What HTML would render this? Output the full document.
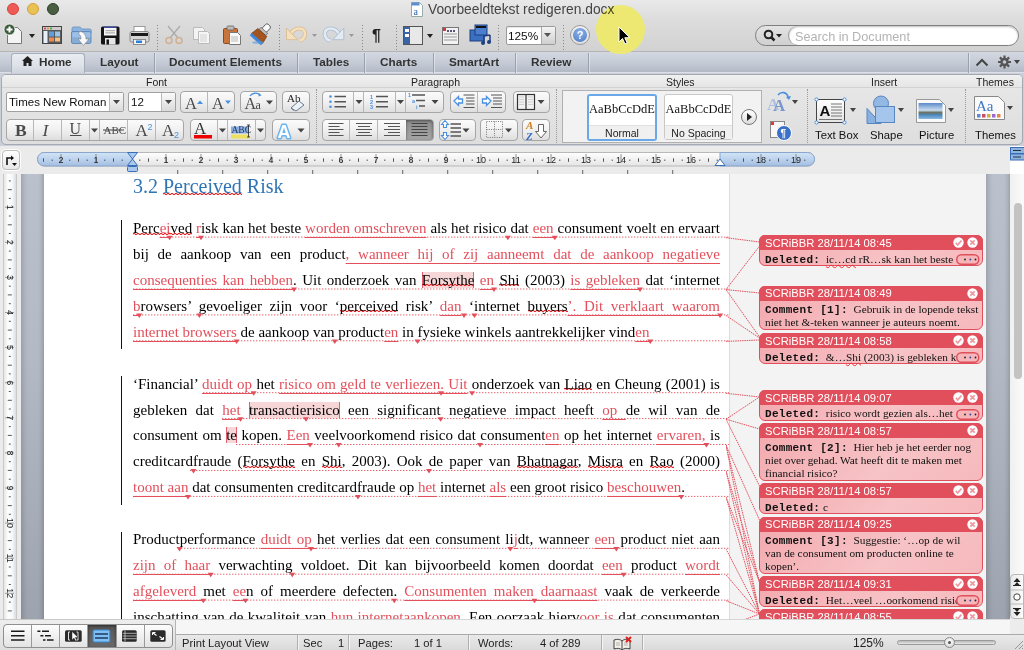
<!DOCTYPE html>
<html><head><meta charset="utf-8">
<style>
*{margin:0;padding:0;box-sizing:border-box}
html,body{width:1024px;height:650px;overflow:hidden;background:#fff;font-family:"Liberation Sans",sans-serif;position:relative}
.a{position:absolute;white-space:nowrap}
.tabsep{top:53px;width:1px;height:20px;background:#9aa1ae;box-shadow:1px 0 0 rgba(255,255,255,.4)}
.tabt{top:54px;font-size:11.75px;font-weight:bold;color:#333;line-height:16px}
.glab{top:76px;font-size:10.5px;color:#222;line-height:13px}
.gsep{top:89px;width:1px;height:54px;border-left:1px dotted #999}
.btn{border:1px solid #a6a6a6;border-radius:4px;background:linear-gradient(#fbfbfb,#f0f0f0 50%,#dedede)}
.vdiv{width:1px;background:#b8b8b8}
.ddb{width:14px;background:linear-gradient(#fafafa,#dadada);border-left:1px solid #bbb}
.ilab{top:128px;font-size:11.3px;color:#111;line-height:14px}
</style></head><body>
<style>
.ln{font-family:"Liberation Serif",serif;font-size:15px;line-height:18px;color:#000;width:587px;white-space:nowrap}
.ln.j{text-align:justify;text-align-last:justify;white-space:normal}
.ins{color:#e2505c;text-decoration:underline;text-decoration-color:#e2505c;text-underline-offset:4px;text-decoration-thickness:1px}
.hl{background-color:#f7d6d8;box-shadow:inset 1px 0 #e06070,inset -1px 0 #e06070}
</style>
<style>
.bal{border:1.5px solid #e24f5c;border-radius:6px;background:linear-gradient(135deg,#f3a9ae,#f7c3c6 60%,#f6b9bd)}
.balh{background:#e24f5c;border-radius:6px 6px 0 0}
.balt{font-size:11.25px;line-height:13px;color:#fff}
.balb{font-family:"Liberation Serif",serif;font-size:11.3px;line-height:14px;color:#111}
.mono{font-family:"Liberation Mono",monospace;font-size:11px;font-weight:bold;letter-spacing:0.3px}
</style>
<style>
.ssep{top:635px;width:1px;height:15px;background:#b0b0b0;box-shadow:1px 0 0 #f4f4f4}
.stt{top:636px;font-size:11.2px;line-height:15px;color:#222}
</style>
<style>.sp{background-image:repeating-linear-gradient(90deg,#e82828 0 2px,rgba(232,40,40,.25) 2px 4px),repeating-linear-gradient(90deg,rgba(232,40,40,.25) 0 2px,#e82828 2px 4px);background-size:100% 1px,100% 1px;background-position:0 calc(100% - 2.4px),0 calc(100% - 1.4px);background-repeat:no-repeat}.ins .sp{text-decoration:none}</style>
<!-- TITLE BAR + TOOLBAR -->
<div class="a" style="left:0;top:0;width:1024px;height:52px;background:linear-gradient(#e9e9e9,#dcdcdc 40%,#d2d2d2);border-bottom:1px solid #b3b3b3"></div>
<div class="a" style="left:7px;top:3px;width:12px;height:12px;border-radius:50%;background:#ee5b56;border:0.5px solid #d8453f"></div>
<div class="a" style="left:27px;top:3px;width:12px;height:12px;border-radius:50%;background:#e9c256;border:0.5px solid #d8a040"></div>
<div class="a" style="left:47px;top:3px;width:12px;height:12px;border-radius:50%;background:#4a5e42;border:0.5px solid #2e3e2a"></div>
<svg class="a" style="left:411px;top:2px" width="12" height="15" viewBox="0 0 12 15"><path d="M0.5 0.5h8l3 3v11h-11z" fill="#fff" stroke="#9aa" stroke-width="1"/><rect x="0.5" y="0.5" width="8" height="3" fill="#5b8fd0"/><text x="2.5" y="13" font-family="Liberation Serif" font-size="10" fill="#2a5fb0">a</text></svg>
<!-- toolbar icons -->
<svg class="a" style="left:0;top:20px" width="620" height="30" viewBox="0 0 620 30">
 <!-- new doc -->
 <path d="M7.5 7.5h10l4 4v12h-14z" fill="#f4f4f4" stroke="#777" stroke-width="1"/>
 <circle cx="9.5" cy="9.5" r="5.5" fill="#3a5a3a" stroke="#fff" stroke-width="0.8"/>
 <path d="M9.5 6.5v6M6.5 9.5h6" stroke="#fff" stroke-width="2"/>
 <path d="M29 14h6l-3 4z" fill="#222"/>
 <!-- gallery -->
 <rect x="42.5" y="6.5" width="19" height="17" fill="#5a5a5a" stroke="#444"/>
 <rect x="43" y="7" width="18" height="3" fill="#ccc"/>
 <circle cx="45" cy="8.5" r="1" fill="#d33"/><circle cx="48" cy="8.5" r="1" fill="#e83"/><circle cx="51" cy="8.5" r="1" fill="#3a3"/>
 <rect x="43.5" y="11" width="4" height="12" fill="#e8eef8"/>
 <rect x="49" y="11.5" width="5" height="5" fill="#5aa0e0"/><rect x="55" y="11.5" width="5" height="5" fill="#9cc4ea"/>
 <rect x="49" y="17.5" width="5" height="4" fill="#f08a50"/><rect x="55" y="17.5" width="5" height="4" fill="#f5c080"/>
 <!-- folder -->
 <path d="M72 8.5q0-1.5 1.5-1.5h6q1 0 1.5 1l0.8 1h8q1.5 0 1.5 1.5v2h-19.3z" fill="#8cb4e0" stroke="#6a8fbc" stroke-width="0.8"/>
 <rect x="71.5" y="11.5" width="19.5" height="12" rx="1.5" fill="#86acd8" stroke="#5f84b4" stroke-width="0.9"/>
 <rect x="72.3" y="12.3" width="18" height="5" fill="#9cc0e8"/>
 <path d="M79.5 11.5c5 0 6.5 4 6.5 7.5h3l-5.5 6.5-5.5-6.5h3c0-3-1-4.5-2.5-5z" fill="#fafafa" stroke="#8a8a8a" stroke-width="0.7"/>
 <!-- save -->
 <rect x="101" y="6.5" width="18.5" height="18" rx="1.5" fill="#151515"/>
 <rect x="104" y="6.5" width="12.5" height="1.5" fill="#3a4aa0"/>
 <rect x="104" y="8" width="12.5" height="7.5" fill="#f6f6f6"/><path d="M105.5 10.7h9.5M105.5 12.9h9.5" stroke="#888" stroke-width="0.8"/>
 <rect x="105" y="18" width="10.5" height="6.5" fill="#e6e6e6"/><rect x="106.5" y="19.5" width="2.5" height="5" fill="#151515"/>
 <!-- print -->
 <rect x="134" y="6.5" width="11" height="6" fill="#fff" stroke="#888" stroke-width="0.8"/>
 <path d="M130 13.5q0-2 2-2h15q2 0 2 2v7q0 1.5-1.5 1.5h-16q-1.5 0-1.5-1.5z" fill="#d4d4d4" stroke="#777" stroke-width="0.8"/>
 <rect x="131" y="13" width="17" height="3" fill="#1a1a1a"/>
 <rect x="133.5" y="19.5" width="12" height="5" fill="#f4f4f4" stroke="#666" stroke-width="0.7"/>
 <rect x="136" y="20.5" width="6" height="2.5" fill="#2a80d8"/>
 <!-- sep -->
 <path d="M157.5 5v26" stroke="#888" stroke-width="1" stroke-dasharray="1 2"/>
 <!-- scissors -->
 <path d="M168 6l10 12M180 6l-10 12" stroke="#aaa" stroke-width="1.2"/>
 <circle cx="169" cy="20.5" r="3" fill="none" stroke="#d0b090" stroke-width="1.5"/><circle cx="179" cy="20.5" r="3" fill="none" stroke="#d0b090" stroke-width="1.5"/>
 <!-- copy -->
 <path d="M193.5 7.5h9l2 2v10h-11z" fill="#f3f3f3" stroke="#bbb"/>
 <path d="M198.5 11.5h9l2 2v10h-11z" fill="#f6f6f6" stroke="#bbb"/>
 <path d="M200 15h7M200 17h7M200 19h7M200 21h7" stroke="#ccc" stroke-width="0.8"/>
 <!-- paste -->
 <rect x="223.5" y="8.5" width="14" height="15" rx="1" fill="#c8743a" stroke="#8a4a20"/>
 <rect x="227" y="6" width="7" height="4" rx="1" fill="#bbb" stroke="#666" stroke-width="0.8"/>
 <path d="M229.5 12.5h8l3 3v9h-11z" fill="#fafafa" stroke="#777"/>
 <path d="M231 17h7M231 19h7M231 21h7" stroke="#aaa" stroke-width="0.8"/>
 <!-- brush -->
 <g transform="rotate(42 261 14)">
  <rect x="258" y="2" width="6" height="8" rx="2" fill="#fafafa" stroke="#555" stroke-width="0.9"/>
  <rect x="256.5" y="9" width="9" height="3" fill="#bbb" stroke="#555" stroke-width="0.6"/>
  <path d="M255 12h12l1.5 8h-15z" fill="#a4541e" stroke="#6a3410" stroke-width="0.6"/>
  <path d="M253.5 19.5h15v3h-15z" fill="#3f86dc"/>
 </g>
 <ellipse cx="258" cy="22.5" rx="6" ry="1.3" fill="#5a9ae0" opacity="0.6"/>
 <!-- sep -->
 <path d="M279.5 5v26" stroke="#888" stroke-width="1" stroke-dasharray="1 2"/>
 <!-- undo -->
 <path d="M290.5 14.5C294 6.5 306 6.5 305 14.5 304.5 18.5 302 20 299.5 20.5" fill="none" stroke="#d8bc94" stroke-width="4.2"/>
 <path d="M290.5 14.5C294 6.5 306 6.5 305 14.5 304.5 18.5 302 20 299.5 20.5" fill="none" stroke="#f6e0bc" stroke-width="2.6"/>
 <path d="M286.5 8v11.7h11z" fill="#f6e0bc" stroke="#d8bc94" stroke-width="0.9"/>
 <path d="M312 14h5l-2.5 3z" fill="#999"/>
 <!-- redo -->
 <path d="M339.3 14.5C335.8 6.5 323.8 6.5 324.8 14.5 325.3 18.5 327.8 20 330.3 20.5" fill="none" stroke="#aebcd0" stroke-width="4.2"/>
 <path d="M339.3 14.5C335.8 6.5 323.8 6.5 324.8 14.5 325.3 18.5 327.8 20 330.3 20.5" fill="none" stroke="#e2eaf4" stroke-width="2.6"/>
 <path d="M343.8 8v11.7h-11z" fill="#e2eaf4" stroke="#aebcd0" stroke-width="0.9"/>
 <path d="M349 14h5l-2.5 3z" fill="#999"/>
 <!-- sep -->
 <path d="M362.5 5v26" stroke="#888" stroke-width="1" stroke-dasharray="1 2"/>
 <!-- pilcrow -->
 <text x="372" y="21" font-family="Liberation Sans" font-weight="bold" font-size="16" fill="#222">¶</text>
 <!-- sep -->
 <path d="M396.5 5v26" stroke="#888" stroke-width="1" stroke-dasharray="1 2"/>
 <!-- sidebar -->
 <rect x="403.5" y="6.5" width="19" height="18" fill="#e8e8e8" stroke="#555"/>
 <rect x="404" y="7" width="6" height="17" fill="#3a64a8"/>
 <rect x="405" y="9" width="4" height="3" fill="#fff"/><rect x="405" y="14" width="4" height="3" fill="#fff"/>
 <path d="M427 14h6l-3 4z" fill="#222"/>
 <!-- header view -->
 <rect x="442.5" y="7.5" width="16" height="17" fill="#f2f2f2" stroke="#777"/>
 <rect x="443" y="8" width="3" height="3" fill="#d33"/>
 <path d="M444 14h13M444 17h13M444 20h13" stroke="#999" stroke-width="1"/>
 <rect x="447" y="10" width="2" height="2" fill="#557"/><rect x="450" y="10" width="2" height="2" fill="#557"/><rect x="453" y="10" width="2" height="2" fill="#557"/>
 <!-- media -->
 <rect x="470" y="10" width="14" height="11" fill="#3b6fc0" stroke="#1d3f80"/>
 <rect x="475" y="5" width="12" height="10" fill="#4a7fd0" stroke="#1d3f80"/>
 <rect x="476" y="6" width="10" height="2" fill="#111"/>
 <path d="M484 16v7M490 15v7M484 16l6-1" stroke="#1d3f80" stroke-width="1.5" fill="none"/>
 <circle cx="483" cy="23" r="2" fill="#1d3f80"/><circle cx="489" cy="22" r="2" fill="#1d3f80"/>
 <!-- sep -->
 <path d="M498.5 5v26" stroke="#888" stroke-width="1" stroke-dasharray="1 2"/>
 <!-- sep -->
 <path d="M563.5 5v26" stroke="#888" stroke-width="1" stroke-dasharray="1 2"/>
</svg>
<!-- zoom box -->
<div class="a" style="left:506px;top:26px;width:50px;height:19px;background:#fff;border:1px solid #9a9a9a;border-radius:2px;box-shadow:inset 0 1px 1px rgba(0,0,0,.1)"></div>
<div class="a" style="left:508px;top:28px;font-size:11.8px;line-height:17px;color:#111">125%</div>
<div class="a" style="left:541px;top:27px;width:14px;height:17px;background:linear-gradient(#f4f4f4,#cfcfcf);border-left:1px solid #aaa"></div>
<svg class="a" style="left:544px;top:33px" width="8" height="5"><path d="M0 0h7l-3.5 4z" fill="#555"/></svg>
<!-- help -->
<div class="a" style="left:570px;top:25px;width:20px;height:20px;border-radius:50%;background:radial-gradient(circle at 50% 35%,#fff,#d5d5d5);border:1px solid #9a9a9a"></div>
<div class="a" style="left:573px;top:28px;width:14px;height:14px;border-radius:50%;background:radial-gradient(circle at 50% 30%,#8fb4ea,#4a78c4);color:#fff;font-size:11px;font-weight:bold;text-align:center;line-height:14px">?</div>
<!-- search -->
<div class="a" style="left:755px;top:25px;width:264px;height:21px;border-radius:11px;background:linear-gradient(#e4e4e4,#d0d0d0);border:1px solid #7e7e7e"></div>
<div class="a" style="left:788px;top:26px;width:230px;height:19px;border-radius:10px;background:#fff;border-left:1px solid #999;box-shadow:inset 0 1px 2px rgba(0,0,0,.25)"></div>
<svg class="a" style="left:763px;top:29px" width="22" height="14"><circle cx="5.5" cy="5.5" r="3.8" fill="none" stroke="#222" stroke-width="2"/><path d="M8 8l3.5 3.5" stroke="#222" stroke-width="2.5"/><path d="M13 5h6l-3 3.5z" fill="#222"/></svg>
<div class="a" style="left:795px;top:28.5px;font-size:12.7px;line-height:16px;color:#b3b3b3">Search in Document</div>
<!-- TABS -->
<div class="a" style="left:0;top:52px;width:1024px;height:20px;background:linear-gradient(#d3d8e1,#c3c9d4 60%,#b3b9c5);"></div><div class="a" style="left:0;top:72px;width:1024px;height:1px;background:#dde0e6"></div>
<div class="a tabsep" style="left:154px"></div><div class="a tabsep" style="left:297px"></div><div class="a tabsep" style="left:364px"></div><div class="a tabsep" style="left:433px"></div><div class="a tabsep" style="left:515px"></div><div class="a tabsep" style="left:588px"></div><div class="a tabsep" style="left:968px"></div>
<div class="a" style="left:11px;top:53px;width:74px;height:21px;background:linear-gradient(#e9ecf1,#dde1e8 60%,#cdd2db);border:1px solid #a6adba;border-bottom:none;border-radius:3px 3px 0 0"></div>
<div class="a tabt" style="left:39px">Home</div>
<svg class="a" style="left:22px;top:56px" width="11" height="10"><path d="M5.5 0L0 5h1.5v5h3v-3h2v3h3V5H11z" fill="#222"/></svg>
<div class="a tabt" style="left:100px">Layout</div>
<div class="a tabt" style="left:169px">Document Elements</div>
<div class="a tabt" style="left:313px">Tables</div>
<div class="a tabt" style="left:380px">Charts</div>
<div class="a tabt" style="left:449px">SmartArt</div>
<div class="a tabt" style="left:531px">Review</div>
<svg class="a" style="left:975px;top:58px" width="14" height="9"><path d="M1.5 7.5l5.5-5.5 5.5 5.5" fill="none" stroke="#444" stroke-width="2"/></svg>
<svg class="a" style="left:998px;top:55px" width="26" height="15" viewBox="0 0 26 15"><g transform="translate(6.5 7)"><circle r="4.2" fill="#555"/><circle r="1.8" fill="#c5cad5"/><g stroke="#555" stroke-width="2.2"><path d="M0 -6.5V6.5M-6.5 0H6.5M-4.6 -4.6L4.6 4.6M-4.6 4.6L4.6 -4.6"/></g><circle r="1.8" fill="#c5cad5"/></g><path d="M16 5h6l-3 4z" fill="#444"/></svg>
<!-- RIBBON -->
<div class="a" style="left:0;top:73px;width:1024px;height:74px;background:#c9ced8"></div>
<div class="a" style="left:1px;top:74px;width:1022px;height:71px;border:1px solid #a4a9b3;border-radius:5px;background:linear-gradient(#ececec,#e6e6e6 20%,#dedede)"></div>
<div class="a" style="left:2px;top:75px;width:1020px;height:13px;border-radius:4px 4px 0 0;background:linear-gradient(#f0f0f0,#e6e6e6);border-bottom:1px solid #d2d2d2"></div>
<div class="a glab" style="left:146px">Font</div>
<div class="a glab" style="left:411px">Paragraph</div>
<div class="a glab" style="left:666px">Styles</div>
<div class="a glab" style="left:871px">Insert</div>
<div class="a glab" style="left:976px">Themes</div>
<div class="a gsep" style="left:316px"></div>
<div class="a gsep" style="left:556px"></div>
<div class="a gsep" style="left:807px"></div>
<div class="a gsep" style="left:965px"></div>
<!-- font name -->
<div class="a" style="left:6px;top:92px;width:118px;height:20px;background:#fff;border:1px solid #a0a0a0;border-radius:2px"></div>
<div class="a" style="left:9px;top:94px;font-size:11.5px;line-height:16px;color:#111">Times New Roman</div>
<div class="a ddb" style="left:109px;top:93px;height:18px"></div>
<svg class="a" style="left:113px;top:100px" width="7" height="5"><path d="M0 0h7l-3.5 4z" fill="#444"/></svg>
<!-- size -->
<div class="a" style="left:128px;top:92px;width:48px;height:20px;background:#fff;border:1px solid #a0a0a0;border-radius:2px"></div>
<div class="a" style="left:131px;top:94px;font-size:11.5px;line-height:16px;color:#111">12</div>
<div class="a ddb" style="left:161px;top:93px;height:18px"></div>
<svg class="a" style="left:165px;top:100px" width="7" height="5"><path d="M0 0h7l-3.5 4z" fill="#444"/></svg>
<!-- grow/shrink -->
<div class="a btn" style="left:180px;top:91px;width:55px;height:22px"></div>
<div class="a vdiv" style="left:207px;top:92px;height:20px"></div>
<div class="a btn" style="left:240px;top:91px;width:37px;height:22px"></div>
<div class="a btn" style="left:282px;top:91px;width:28px;height:22px"></div>
<!-- row 2 font -->
<div class="a btn" style="left:6px;top:119px;width:178px;height:22px"></div>
<div class="a vdiv" style="left:33px;top:120px;height:20px"></div><div class="a vdiv" style="left:61px;top:120px;height:20px"></div><div class="a vdiv" style="left:89px;top:120px;height:20px"></div><div class="a vdiv" style="left:99px;top:120px;height:20px"></div><div class="a vdiv" style="left:127px;top:120px;height:20px"></div><div class="a vdiv" style="left:155px;top:120px;height:20px"></div>
<div class="a btn" style="left:190px;top:119px;width:76px;height:22px"></div>
<div class="a vdiv" style="left:217px;top:120px;height:20px"></div><div class="a vdiv" style="left:227px;top:120px;height:20px"></div><div class="a vdiv" style="left:255px;top:120px;height:20px"></div>
<div class="a btn" style="left:272px;top:119px;width:38px;height:22px"></div>
<svg class="a" style="left:0;top:88px" width="316" height="56" viewBox="0 88 316 56">
 <g font-family="Liberation Serif" fill="#4a4a4a">
  <text x="185" y="108.5" font-size="16.5">A</text><path d="M197 104h6l-3-3.5z" fill="#4a90e0"/>
  <text x="212" y="108.5" font-size="16.5">A</text><path d="M225 100.5h6l-3 3.5z" fill="#4a90e0"/>
  <text x="244.5" y="108.5" font-size="16">A</text><text x="255.5" y="108.5" font-size="12">a</text>
  <text x="287" y="101.5" font-size="11" fill="#222">Ab</text>
  <text x="15" y="135.6" font-size="17.5" font-weight="bold">B</text>
  <text x="42.5" y="135.6" font-size="17.5" font-style="italic">I</text>
  <text x="69.5" y="134" font-size="16">U</text>
  <text x="103.5" y="134" font-size="11">ABC</text>
  <text x="135.5" y="135.6" font-size="17">A</text>
  <text x="162" y="135.6" font-size="17">A</text>
  <text x="194" y="134" font-size="17" fill="#333">A</text>
 </g>
 <path d="M70 135.5h11.5" stroke="#4a4a4a" stroke-width="1"/>
 <path d="M103 130h21" stroke="#444" stroke-width="1"/>
 <text x="147.5" y="129.5" font-family="Liberation Sans" font-size="9" fill="#4a90e0">2</text>
 <text x="174" y="137.5" font-family="Liberation Sans" font-size="9" fill="#4a90e0">2</text>
 <path d="M250 96c2-3 7-4 10-1" fill="none" stroke="#4a90e0" stroke-width="1.3"/><path d="M259 93l2.5 2.5-3 1z" fill="#4a90e0"/>
 <path d="M291 108l8-7 5 4-8 6z" fill="#eef3f8" stroke="#6a7a90" stroke-width="1"/><path d="M291 108l3 2.5" stroke="#6a7a90"/>
 <path d="M266 100.5h7l-3.5 4z" fill="#444"/>
 <path d="M91 128.5h7l-3.5 4z" fill="#444"/>
 <rect x="194" y="135" width="18" height="3.5" fill="#e00"/>
 <path d="M219 128.5h7l-3.5 4z" fill="#444"/>
 <rect x="231" y="126.5" width="18" height="7" fill="#8ab0e0"/>
 <text x="231.5" y="133" font-family="Liberation Serif" font-size="9.5" fill="#2a3a60">ABC</text>
 <rect x="231" y="134.5" width="18" height="4" fill="#ede060"/>
 <path d="M248.5 125v12M247 125h3M247 137h3" stroke="#222" stroke-width="0.8"/>
 <path d="M257 128.5h7l-3.5 4z" fill="#444"/>
 <text x="277.5" y="137.5" font-family="Liberation Sans" font-size="18" font-weight="bold" fill="#fff" stroke="#6ab4f0" stroke-width="3" paint-order="stroke" stroke-linejoin="round">A</text>
 <path d="M297.5 128.5h7l-3.5 4z" fill="#444"/>
</svg>
<!-- paragraph -->
<div class="a btn" style="left:322px;top:91px;width:122px;height:22px"></div>
<div class="a vdiv" style="left:353px;top:92px;height:20px"></div><div class="a vdiv" style="left:363px;top:92px;height:20px"></div><div class="a vdiv" style="left:395px;top:92px;height:20px"></div><div class="a vdiv" style="left:405px;top:92px;height:20px"></div>
<div class="a btn" style="left:450px;top:91px;width:56px;height:22px"></div>
<div class="a vdiv" style="left:477px;top:92px;height:20px"></div>
<div class="a btn" style="left:513px;top:91px;width:37px;height:22px"></div>
<div class="a btn" style="left:322px;top:119px;width:112px;height:22px"></div>
<div class="a" style="left:406px;top:120px;width:27px;height:20px;background:linear-gradient(#8c8c8c,#a6a6a6);border-radius:0 3px 3px 0;box-shadow:inset 0 1px 3px rgba(0,0,0,.45)"></div>
<div class="a vdiv" style="left:349px;top:120px;height:20px"></div><div class="a vdiv" style="left:377px;top:120px;height:20px"></div>
<div class="a btn" style="left:439px;top:119px;width:37px;height:22px"></div>
<div class="a btn" style="left:480px;top:119px;width:38px;height:22px"></div>
<div class="a btn" style="left:522px;top:119px;width:28px;height:22px"></div>
<svg class="a" style="left:316px;top:88px" width="240" height="56" viewBox="316 88 240 56">
 <g fill="#4a90e0"><circle cx="330.5" cy="96.5" r="1.3"/><circle cx="330.5" cy="101.8" r="1.3"/><circle cx="330.5" cy="106.8" r="1.3"/></g>
 <g stroke="#555" stroke-width="1.4"><path d="M334.5 96.5h11.5M334.5 101.8h11.5M334.5 106.8h11.5"/></g>
 <path d="M355.5 100h7l-3.5 4z" fill="#444"/>
 <g fill="#4a90e0" font-size="5.5" font-family="Liberation Sans" font-weight="bold"><text x="370" y="98.5">1</text><text x="370" y="104">2</text><text x="370" y="109">3</text></g>
 <g stroke="#555" stroke-width="1.4"><path d="M376 96.5h12M376 101.8h12M376 106.8h12"/></g>
 <path d="M397 100h7l-3.5 4z" fill="#444"/>
 <g fill="#4a90e0" font-size="5.5" font-family="Liberation Sans" font-weight="bold"><text x="408" y="97">1</text><text x="412" y="102.5">a</text><text x="416" y="109">i</text></g>
 <g stroke="#555" stroke-width="1.3"><path d="M412 95h13M416 100.5h9M419 106h6"/></g>
 <path d="M431.5 100h7l-3.5 4z" fill="#444"/>
 <g stroke="#555" stroke-width="1.2"><path d="M463.5 95h11M466 98h8.5M466 101h8.5M466 104h8.5M463.5 107.5h11M491 95h11M493 98h9M493 101h9M493 104h9M491 107.5h11"/></g>
 <path d="M454 101l4.5-4.5v2.5h4v4h-4v2.5z" fill="#fff" stroke="#4a90e0" stroke-width="1.3"/>
 <path d="M491 101l-4.5-4.5v2.5h-4v4h4v2.5z" fill="#fff" stroke="#4a90e0" stroke-width="1.3"/>
 <rect x="517.5" y="94.5" width="17" height="15" fill="#f2f2f2" stroke="#333" stroke-width="1.2"/><path d="M526 94.5v15" stroke="#333" stroke-width="1.2"/>
 <path d="M519 97h5M519 99.5h5M519 102h5M519 104.5h5M528 97h5M528 99.5h5M528 102h5M528 104.5h5" stroke="#c8c8c8" stroke-width="0.8"/>
 <path d="M537.5 100h7l-3.5 4z" fill="#444"/>
 <g stroke="#555" stroke-width="1.2"><path d="M328.5 123.5h15M328.5 126.5h11M328.5 129.5h15M328.5 132.5h11M328.5 135.5h15"/><path d="M356 123.5h16M358 126.5h12M356 129.5h16M358 132.5h12M356 135.5h16"/><path d="M384 123.5h16M388 126.5h12M384 129.5h16M388 132.5h12M384 135.5h16"/></g>
 <g stroke="#444" stroke-width="1.2"><path d="M411.5 123.5h16M411.5 126.5h16M411.5 129.5h16M411.5 132.5h16M411.5 135.5h16"/></g>
 <path d="M445 120.5l3.5 4h-2v3h-3v-3h-2zM445 139.5l3.5-4h-2v-3h-3v3h-2z" fill="#fff" stroke="#4a90e0" stroke-width="1.1"/>
 <g stroke="#555" stroke-width="1.3"><path d="M450.5 124h10.5M450.5 128h10.5M450.5 132h10.5M450.5 136h10.5"/></g>
 <path d="M462.5 128.5h7l-3.5 4z" fill="#444"/>
 <path d="M486.5 121.5h16v16h-16zM494.5 121.5v16M486.5 129.5h16" fill="none" stroke="#777" stroke-dasharray="1 1.3"/>
 <path d="M505 128.5h7l-3.5 4z" fill="#444"/>
 <text x="526" y="129" font-family="Liberation Serif" font-size="11" font-weight="bold" font-style="italic" fill="#d0801c">A</text>
 <text x="526" y="139.5" font-family="Liberation Serif" font-size="11" font-weight="bold" font-style="italic" fill="#3a6ec8">Z</text>
 <path d="M538.5 124.5v7h-3l5.5 6.5 5.5-6.5h-3v-7z" fill="#fff" stroke="#666" stroke-width="1"/>
</svg>
<!-- styles -->
<div class="a" style="left:562px;top:90px;width:200px;height:53px;background:#f2f2f2;border:1px solid #b0b0b0"></div>
<div class="a" style="left:587px;top:94px;width:70px;height:47px;background:#fff;border:2px solid #6aa8e8;border-radius:3px"></div>
<div class="a" style="left:589px;top:125px;width:66px;height:14px;background:#f0f0f0;border-top:1px solid #e0e0e0"></div>
<div class="a" style="left:589px;top:101px;width:66px;text-align:center;font-family:'Liberation Serif';font-size:12.5px;line-height:16px;color:#111">AaBbCcDdE</div>
<div class="a" style="left:589px;top:126px;width:66px;text-align:center;font-size:10.5px;line-height:14px;color:#222">Normal</div>
<div class="a" style="left:664px;top:94px;width:69px;height:46px;background:#fff;border:1px solid #c8c8c8;border-radius:3px"></div>
<div class="a" style="left:665px;top:125px;width:67px;height:14px;background:#f0f0f0;border-top:1px solid #e0e0e0"></div>
<div class="a" style="left:665px;top:101px;width:67px;text-align:center;font-family:'Liberation Serif';font-size:12.5px;line-height:16px;color:#111">AaBbCcDdE</div>
<div class="a" style="left:665px;top:126px;width:67px;text-align:center;font-size:10.5px;line-height:14px;color:#222">No Spacing</div>
<div class="a" style="left:741px;top:109px;width:16px;height:16px;border-radius:50%;background:linear-gradient(#fff,#ddd);border:1px solid #777"></div>
<svg class="a" style="left:747px;top:113px" width="6" height="8"><path d="M0 0l5 4-5 4z" fill="#222"/></svg>
<svg class="a" style="left:766px;top:89px" width="34" height="54" viewBox="0 0 34 54">
 <text x="1" y="21" font-family="Liberation Serif" font-size="17" font-weight="bold" fill="#b0c0dc">A</text>
 <text x="7" y="22" font-family="Liberation Serif" font-size="17" font-weight="bold" fill="#7898cc">A</text>
 <path d="M12 6c3-4 9-3 10 2" fill="none" stroke="#4a90e0" stroke-width="1.6"/><path d="M20 8l3 3 2-4z" fill="#4a90e0"/>
 <path d="M26 11h6l-3 4z" fill="#444"/>
 <rect x="4.5" y="32.5" width="14" height="16" fill="#f8f8f8" stroke="#888"/>
 <rect x="5" y="33" width="3" height="3" fill="#e33"/>
 <circle cx="18" cy="44" r="7.5" fill="#3a70c8" stroke="#fff" stroke-width="1"/>
 <text x="14.5" y="48" font-size="10" font-family="Liberation Sans" font-weight="bold" fill="#fff">¶</text>
</svg>
<!-- insert -->
<svg class="a" style="left:807px;top:88px" width="217" height="40" viewBox="807 88 217 40">
 <defs><linearGradient id="g1" x1="0" y1="0" x2="0" y2="1"><stop offset="0" stop-color="#fff"/><stop offset="1" stop-color="#e4e4e4"/></linearGradient>
 <linearGradient id="sky" x1="0" y1="0" x2="0" y2="1"><stop offset="0" stop-color="#5a8ac8"/><stop offset="0.45" stop-color="#c8ddf0"/><stop offset="0.6" stop-color="#6a7060"/><stop offset="0.75" stop-color="#4a8ac0"/><stop offset="1" stop-color="#8ab8e0"/></linearGradient></defs>
 <rect x="816.5" y="99.5" width="28" height="23" fill="url(#g1)" stroke="#444"/>
 <text x="819.5" y="116" font-family="Liberation Sans" font-size="15" font-weight="bold" fill="#111">A</text>
 <path d="M831 104h11M831 107h11M831 110h11M831 113h11M831 116h11M819 119.5h23" stroke="#777" stroke-width="1"/>
 <g fill="#fff" stroke="#4a90e0" stroke-width="1"><circle cx="816.5" cy="99.5" r="1.6"/><circle cx="844.5" cy="99.5" r="1.6"/><circle cx="816.5" cy="122.5" r="1.6"/><circle cx="844.5" cy="122.5" r="1.6"/></g>
 <path d="M850 108h6l-3 4z" fill="#444"/>
 <circle cx="881" cy="103.5" r="7.5" fill="#94b8e4" stroke="#5a86c0"/>
 <path d="M867 123.5v-15l14 15z" fill="#88b0e0" stroke="#5a86c0"/>
 <rect x="875.5" y="106.5" width="19" height="16" fill="#a4c6ec" stroke="#5a86c0"/>
 <path d="M898 108h6l-3 4z" fill="#444"/>
 <path d="M916.5 99.5h23l6 6v17h-29z" fill="#fafafa" stroke="#999"/>
 <rect x="918.5" y="103" width="24" height="16" fill="url(#sky)"/>
 <path d="M948 108h6l-3 4z" fill="#444"/>
 <path d="M974.5 96.5h24l6 6v17h-30z" fill="#fafafa" stroke="#888"/>
 <text x="976" y="111" font-family="Liberation Serif" font-size="15" fill="#3a78c8">Aa</text>
 <g><rect x="977" y="114" width="3.5" height="3.5" fill="#5a8ad0"/><rect x="982" y="114" width="3.5" height="3.5" fill="#d04a6a"/><rect x="987" y="114" width="3.5" height="3.5" fill="#d0b040"/><rect x="992" y="114" width="3.5" height="3.5" fill="#9a6ad0"/><rect x="997" y="114" width="3.5" height="3.5" fill="#e08a40"/></g>
 <path d="M1007 106h6l-3 4z" fill="#444"/>
</svg>
<div class="a ilab" style="left:815px">Text Box</div>
<div class="a ilab" style="left:870px">Shape</div>
<div class="a ilab" style="left:919px">Picture</div>
<div class="a ilab" style="left:975px">Themes</div>
<!-- RULER -->
<div class="a" style="left:0;top:146px;width:1010px;height:28px;background:#ebebeb"></div>
<div class="a" style="left:1010px;top:146px;width:14px;height:28px;background:#fff"></div>
<div class="a" style="left:2px;top:150px;width:18px;height:20px;border-radius:4px;background:linear-gradient(#fefefe,#e8e8e8);border:1px solid #bdbdbd;box-shadow:0 0 0 1px #fff"></div>
<svg class="a" style="left:4px;top:153px" width="14" height="15"><path d="M3 12V5h5" fill="none" stroke="#111" stroke-width="1.6"/><path d="M7 2.5l3 2.5-3 2.5z" fill="#111"/><path d="M8 10h5l-2.5 3z" fill="#111"/></svg>
<svg class="a" style="left:0;top:146px" width="1010" height="28" viewBox="0 0 1010 28">
<defs><linearGradient id="rb" x1="0" y1="0" x2="0" y2="1"><stop offset="0" stop-color="#d2e4f6"/><stop offset="0.5" stop-color="#bcd3ee"/><stop offset="1" stop-color="#a4bde0"/></linearGradient><linearGradient id="rw" x1="0" y1="0" x2="0" y2="1"><stop offset="0" stop-color="#ffffff"/><stop offset="1" stop-color="#e4e4e4"/></linearGradient></defs>
<rect x="37.5" y="6.5" width="777" height="13.5" rx="6.7" fill="url(#rw)" stroke="#b8b8b8"/>
<path d="M132.5 6.5H44.2a6.7 6.7 0 0 0 0 13.5H132.5z" fill="url(#rb)" stroke="#8aa6cc"/>
<path d="M720 6.5H807.8a6.7 6.7 0 0 1 0 13.5H720z" fill="url(#rb)" stroke="#8aa6cc"/>
<path d="M43.5 12.3v3.5" stroke="#444" stroke-width="0.9"/>
<path d="M52.2 13.5v1.5" stroke="#444" stroke-width="0.9"/>
<path d="M69.8 13.5v1.5" stroke="#444" stroke-width="0.9"/>
<path d="M78.5 12.3v3.5" stroke="#444" stroke-width="0.9"/>
<path d="M87.2 13.5v1.5" stroke="#444" stroke-width="0.9"/>
<path d="M61.0 8v9" stroke="#666" stroke-width="0.7"/>
<text x="61.0" y="17.2" text-anchor="middle" font-family="Liberation Sans" font-size="9" fill="#222" stroke="#fff" stroke-width="0" >2</text>
<path d="M104.8 13.5v1.5" stroke="#444" stroke-width="0.9"/>
<path d="M113.5 12.3v3.5" stroke="#444" stroke-width="0.9"/>
<path d="M122.2 13.5v1.5" stroke="#444" stroke-width="0.9"/>
<path d="M96.0 8v9" stroke="#666" stroke-width="0.7"/>
<text x="96.0" y="17.2" text-anchor="middle" font-family="Liberation Sans" font-size="9" fill="#222" stroke="#fff" stroke-width="0" >1</text>
<path d="M139.8 13.5v1.5" stroke="#444" stroke-width="0.9"/>
<path d="M148.5 12.3v3.5" stroke="#444" stroke-width="0.9"/>
<path d="M157.2 13.5v1.5" stroke="#444" stroke-width="0.9"/>
<path d="M174.8 13.5v1.5" stroke="#444" stroke-width="0.9"/>
<path d="M183.5 12.3v3.5" stroke="#444" stroke-width="0.9"/>
<path d="M192.2 13.5v1.5" stroke="#444" stroke-width="0.9"/>
<path d="M166.0 8v9" stroke="#666" stroke-width="0.7"/>
<text x="166.0" y="17.2" text-anchor="middle" font-family="Liberation Sans" font-size="9" fill="#222" stroke="#fff" stroke-width="0" >1</text>
<path d="M209.8 13.5v1.5" stroke="#444" stroke-width="0.9"/>
<path d="M218.5 12.3v3.5" stroke="#444" stroke-width="0.9"/>
<path d="M227.2 13.5v1.5" stroke="#444" stroke-width="0.9"/>
<path d="M201.0 8v9" stroke="#666" stroke-width="0.7"/>
<text x="201.0" y="17.2" text-anchor="middle" font-family="Liberation Sans" font-size="9" fill="#222" stroke="#fff" stroke-width="0" >2</text>
<path d="M244.8 13.5v1.5" stroke="#444" stroke-width="0.9"/>
<path d="M253.5 12.3v3.5" stroke="#444" stroke-width="0.9"/>
<path d="M262.2 13.5v1.5" stroke="#444" stroke-width="0.9"/>
<path d="M236.0 8v9" stroke="#666" stroke-width="0.7"/>
<text x="236.0" y="17.2" text-anchor="middle" font-family="Liberation Sans" font-size="9" fill="#222" stroke="#fff" stroke-width="0" >3</text>
<path d="M279.8 13.5v1.5" stroke="#444" stroke-width="0.9"/>
<path d="M288.5 12.3v3.5" stroke="#444" stroke-width="0.9"/>
<path d="M297.2 13.5v1.5" stroke="#444" stroke-width="0.9"/>
<path d="M271.0 8v9" stroke="#666" stroke-width="0.7"/>
<text x="271.0" y="17.2" text-anchor="middle" font-family="Liberation Sans" font-size="9" fill="#222" stroke="#fff" stroke-width="0" >4</text>
<path d="M314.8 13.5v1.5" stroke="#444" stroke-width="0.9"/>
<path d="M323.5 12.3v3.5" stroke="#444" stroke-width="0.9"/>
<path d="M332.2 13.5v1.5" stroke="#444" stroke-width="0.9"/>
<path d="M306.0 8v9" stroke="#666" stroke-width="0.7"/>
<text x="306.0" y="17.2" text-anchor="middle" font-family="Liberation Sans" font-size="9" fill="#222" stroke="#fff" stroke-width="0" >5</text>
<path d="M349.8 13.5v1.5" stroke="#444" stroke-width="0.9"/>
<path d="M358.5 12.3v3.5" stroke="#444" stroke-width="0.9"/>
<path d="M367.2 13.5v1.5" stroke="#444" stroke-width="0.9"/>
<path d="M341.0 8v9" stroke="#666" stroke-width="0.7"/>
<text x="341.0" y="17.2" text-anchor="middle" font-family="Liberation Sans" font-size="9" fill="#222" stroke="#fff" stroke-width="0" >6</text>
<path d="M384.8 13.5v1.5" stroke="#444" stroke-width="0.9"/>
<path d="M393.5 12.3v3.5" stroke="#444" stroke-width="0.9"/>
<path d="M402.2 13.5v1.5" stroke="#444" stroke-width="0.9"/>
<path d="M376.0 8v9" stroke="#666" stroke-width="0.7"/>
<text x="376.0" y="17.2" text-anchor="middle" font-family="Liberation Sans" font-size="9" fill="#222" stroke="#fff" stroke-width="0" >7</text>
<path d="M419.8 13.5v1.5" stroke="#444" stroke-width="0.9"/>
<path d="M428.5 12.3v3.5" stroke="#444" stroke-width="0.9"/>
<path d="M437.2 13.5v1.5" stroke="#444" stroke-width="0.9"/>
<path d="M411.0 8v9" stroke="#666" stroke-width="0.7"/>
<text x="411.0" y="17.2" text-anchor="middle" font-family="Liberation Sans" font-size="9" fill="#222" stroke="#fff" stroke-width="0" >8</text>
<path d="M454.8 13.5v1.5" stroke="#444" stroke-width="0.9"/>
<path d="M463.5 12.3v3.5" stroke="#444" stroke-width="0.9"/>
<path d="M472.2 13.5v1.5" stroke="#444" stroke-width="0.9"/>
<path d="M446.0 8v9" stroke="#666" stroke-width="0.7"/>
<text x="446.0" y="17.2" text-anchor="middle" font-family="Liberation Sans" font-size="9" fill="#222" stroke="#fff" stroke-width="0" >9</text>
<path d="M489.8 13.5v1.5" stroke="#444" stroke-width="0.9"/>
<path d="M498.5 12.3v3.5" stroke="#444" stroke-width="0.9"/>
<path d="M507.2 13.5v1.5" stroke="#444" stroke-width="0.9"/>
<path d="M481.0 8v9" stroke="#666" stroke-width="0.7"/>
<text x="481.0" y="17.2" text-anchor="middle" font-family="Liberation Sans" font-size="9" fill="#222" stroke="#fff" stroke-width="0" >10</text>
<path d="M524.8 13.5v1.5" stroke="#444" stroke-width="0.9"/>
<path d="M533.5 12.3v3.5" stroke="#444" stroke-width="0.9"/>
<path d="M542.2 13.5v1.5" stroke="#444" stroke-width="0.9"/>
<path d="M516.0 8v9" stroke="#666" stroke-width="0.7"/>
<text x="516.0" y="17.2" text-anchor="middle" font-family="Liberation Sans" font-size="9" fill="#222" stroke="#fff" stroke-width="0" >11</text>
<path d="M559.8 13.5v1.5" stroke="#444" stroke-width="0.9"/>
<path d="M568.5 12.3v3.5" stroke="#444" stroke-width="0.9"/>
<path d="M577.2 13.5v1.5" stroke="#444" stroke-width="0.9"/>
<path d="M551.0 8v9" stroke="#666" stroke-width="0.7"/>
<text x="551.0" y="17.2" text-anchor="middle" font-family="Liberation Sans" font-size="9" fill="#222" stroke="#fff" stroke-width="0" >12</text>
<path d="M594.8 13.5v1.5" stroke="#444" stroke-width="0.9"/>
<path d="M603.5 12.3v3.5" stroke="#444" stroke-width="0.9"/>
<path d="M612.2 13.5v1.5" stroke="#444" stroke-width="0.9"/>
<path d="M586.0 8v9" stroke="#666" stroke-width="0.7"/>
<text x="586.0" y="17.2" text-anchor="middle" font-family="Liberation Sans" font-size="9" fill="#222" stroke="#fff" stroke-width="0" >13</text>
<path d="M629.8 13.5v1.5" stroke="#444" stroke-width="0.9"/>
<path d="M638.5 12.3v3.5" stroke="#444" stroke-width="0.9"/>
<path d="M647.2 13.5v1.5" stroke="#444" stroke-width="0.9"/>
<path d="M621.0 8v9" stroke="#666" stroke-width="0.7"/>
<text x="621.0" y="17.2" text-anchor="middle" font-family="Liberation Sans" font-size="9" fill="#222" stroke="#fff" stroke-width="0" >14</text>
<path d="M664.8 13.5v1.5" stroke="#444" stroke-width="0.9"/>
<path d="M673.5 12.3v3.5" stroke="#444" stroke-width="0.9"/>
<path d="M682.2 13.5v1.5" stroke="#444" stroke-width="0.9"/>
<path d="M656.0 8v9" stroke="#666" stroke-width="0.7"/>
<text x="656.0" y="17.2" text-anchor="middle" font-family="Liberation Sans" font-size="9" fill="#222" stroke="#fff" stroke-width="0" >15</text>
<path d="M699.8 13.5v1.5" stroke="#444" stroke-width="0.9"/>
<path d="M708.5 12.3v3.5" stroke="#444" stroke-width="0.9"/>
<path d="M717.2 13.5v1.5" stroke="#444" stroke-width="0.9"/>
<path d="M691.0 8v9" stroke="#666" stroke-width="0.7"/>
<text x="691.0" y="17.2" text-anchor="middle" font-family="Liberation Sans" font-size="9" fill="#222" stroke="#fff" stroke-width="0" >16</text>
<path d="M734.8 13.5v1.5" stroke="#444" stroke-width="0.9"/>
<path d="M743.5 12.3v3.5" stroke="#444" stroke-width="0.9"/>
<path d="M752.2 13.5v1.5" stroke="#444" stroke-width="0.9"/>
<path d="M769.8 13.5v1.5" stroke="#444" stroke-width="0.9"/>
<path d="M778.5 12.3v3.5" stroke="#444" stroke-width="0.9"/>
<path d="M787.2 13.5v1.5" stroke="#444" stroke-width="0.9"/>
<path d="M761.0 8v9" stroke="#666" stroke-width="0.7"/>
<text x="761.0" y="17.2" text-anchor="middle" font-family="Liberation Sans" font-size="9" fill="#222" stroke="#fff" stroke-width="0" >18</text>
<path d="M804.8 13.5v1.5" stroke="#444" stroke-width="0.9"/>
<path d="M796.0 8v9" stroke="#666" stroke-width="0.7"/>
<text x="796.0" y="17.2" text-anchor="middle" font-family="Liberation Sans" font-size="9" fill="#222" stroke="#fff" stroke-width="0" >19</text>
<path d="M127.5 6.5h10l-5 6.5z" fill="#a8c8ee" stroke="#3a6fb8"/>
<path d="M132.5 13l5 6.5h-10z" fill="#a8c8ee" stroke="#3a6fb8"/>
<rect x="127.5" y="20.5" width="10" height="5" rx="1" fill="#a8c8ee" stroke="#3a6fb8"/>
<path d="M720 13l5 6.5h-10z" fill="#fff" stroke="#3a6fb8"/><path d="M177.7 24v4" stroke="#555" stroke-width="0.9"/><path d="M222.7 24v4" stroke="#555" stroke-width="0.9"/><path d="M267.7 24v4" stroke="#555" stroke-width="0.9"/><path d="M312.7 24v4" stroke="#555" stroke-width="0.9"/><path d="M357.7 24v4" stroke="#555" stroke-width="0.9"/><path d="M402.7 24v4" stroke="#555" stroke-width="0.9"/><path d="M447.7 24v4" stroke="#555" stroke-width="0.9"/><path d="M492.7 24v4" stroke="#555" stroke-width="0.9"/><path d="M537.7 24v4" stroke="#555" stroke-width="0.9"/><path d="M582.7 24v4" stroke="#555" stroke-width="0.9"/><path d="M627.7 24v4" stroke="#555" stroke-width="0.9"/><path d="M672.7 24v4" stroke="#555" stroke-width="0.9"/>
</svg>
<svg class="a" style="left:1010px;top:147px" width="14" height="14"><rect x="0.5" y="0.5" width="14" height="6" fill="#8fb4e0" stroke="#3a6fb8"/><rect x="0.5" y="7" width="14" height="6" fill="#8fb4e0" stroke="#3a6fb8"/><path d="M3 3.5h8M3 10h8" stroke="#234" stroke-width="1"/></svg>
<div class="a" style="left:0;top:174px;width:21px;height:445px;background:#ebebeb"></div>
<div class="a" style="left:3px;top:174px;width:14px;height:445px;background:linear-gradient(90deg,#e6e6e6,#fff 35%,#f6f7f9 70%,#d8dde6);border-left:1px solid #c8c8c8;border-right:1px solid #c8c8c8"></div>
<svg class="a" style="left:3px;top:174px" width="14" height="445" viewBox="0 0 14 445">
<path d="M5.8 6.9h2" stroke="#444" stroke-width="0.9"/>
<path d="M4.8 15.7h4" stroke="#444" stroke-width="0.9"/>
<path d="M5.8 24.4h2" stroke="#444" stroke-width="0.9"/>
<path d="M5.8 42.0h2" stroke="#444" stroke-width="0.9"/>
<path d="M4.8 50.8h4" stroke="#444" stroke-width="0.9"/>
<path d="M5.8 59.5h2" stroke="#444" stroke-width="0.9"/>
<path d="M2 33.2h9" stroke="#777" stroke-width="0.7"/>
<text transform="translate(3.5 33.2) rotate(90)" text-anchor="middle" font-family="Liberation Sans" font-size="9" fill="#222">1</text>
<path d="M5.8 77.1h2" stroke="#444" stroke-width="0.9"/>
<path d="M4.8 85.9h4" stroke="#444" stroke-width="0.9"/>
<path d="M5.8 94.6h2" stroke="#444" stroke-width="0.9"/>
<path d="M2 68.3h9" stroke="#777" stroke-width="0.7"/>
<text transform="translate(3.5 68.3) rotate(90)" text-anchor="middle" font-family="Liberation Sans" font-size="9" fill="#222">2</text>
<path d="M5.8 112.2h2" stroke="#444" stroke-width="0.9"/>
<path d="M4.8 120.9h4" stroke="#444" stroke-width="0.9"/>
<path d="M5.8 129.7h2" stroke="#444" stroke-width="0.9"/>
<path d="M2 103.4h9" stroke="#777" stroke-width="0.7"/>
<text transform="translate(3.5 103.4) rotate(90)" text-anchor="middle" font-family="Liberation Sans" font-size="9" fill="#222">3</text>
<path d="M5.8 147.3h2" stroke="#444" stroke-width="0.9"/>
<path d="M4.8 156.1h4" stroke="#444" stroke-width="0.9"/>
<path d="M5.8 164.8h2" stroke="#444" stroke-width="0.9"/>
<path d="M2 138.5h9" stroke="#777" stroke-width="0.7"/>
<text transform="translate(3.5 138.5) rotate(90)" text-anchor="middle" font-family="Liberation Sans" font-size="9" fill="#222">4</text>
<path d="M5.8 182.4h2" stroke="#444" stroke-width="0.9"/>
<path d="M4.8 191.2h4" stroke="#444" stroke-width="0.9"/>
<path d="M5.8 199.9h2" stroke="#444" stroke-width="0.9"/>
<path d="M2 173.6h9" stroke="#777" stroke-width="0.7"/>
<text transform="translate(3.5 173.6) rotate(90)" text-anchor="middle" font-family="Liberation Sans" font-size="9" fill="#222">5</text>
<path d="M5.8 217.5h2" stroke="#444" stroke-width="0.9"/>
<path d="M4.8 226.3h4" stroke="#444" stroke-width="0.9"/>
<path d="M5.8 235.0h2" stroke="#444" stroke-width="0.9"/>
<path d="M2 208.7h9" stroke="#777" stroke-width="0.7"/>
<text transform="translate(3.5 208.7) rotate(90)" text-anchor="middle" font-family="Liberation Sans" font-size="9" fill="#222">6</text>
<path d="M5.8 252.6h2" stroke="#444" stroke-width="0.9"/>
<path d="M4.8 261.4h4" stroke="#444" stroke-width="0.9"/>
<path d="M5.8 270.1h2" stroke="#444" stroke-width="0.9"/>
<path d="M2 243.8h9" stroke="#777" stroke-width="0.7"/>
<text transform="translate(3.5 243.8) rotate(90)" text-anchor="middle" font-family="Liberation Sans" font-size="9" fill="#222">7</text>
<path d="M5.8 287.7h2" stroke="#444" stroke-width="0.9"/>
<path d="M4.8 296.4h4" stroke="#444" stroke-width="0.9"/>
<path d="M5.8 305.2h2" stroke="#444" stroke-width="0.9"/>
<path d="M2 278.9h9" stroke="#777" stroke-width="0.7"/>
<text transform="translate(3.5 278.9) rotate(90)" text-anchor="middle" font-family="Liberation Sans" font-size="9" fill="#222">8</text>
<path d="M5.8 322.8h2" stroke="#444" stroke-width="0.9"/>
<path d="M4.8 331.6h4" stroke="#444" stroke-width="0.9"/>
<path d="M5.8 340.3h2" stroke="#444" stroke-width="0.9"/>
<path d="M2 314.0h9" stroke="#777" stroke-width="0.7"/>
<text transform="translate(3.5 314.0) rotate(90)" text-anchor="middle" font-family="Liberation Sans" font-size="9" fill="#222">9</text>
<path d="M5.8 357.9h2" stroke="#444" stroke-width="0.9"/>
<path d="M4.8 366.6h4" stroke="#444" stroke-width="0.9"/>
<path d="M5.8 375.4h2" stroke="#444" stroke-width="0.9"/>
<path d="M2 349.1h9" stroke="#777" stroke-width="0.7"/>
<text transform="translate(3.5 349.1) rotate(90)" text-anchor="middle" font-family="Liberation Sans" font-size="9" fill="#222">10</text>
<path d="M5.8 393.0h2" stroke="#444" stroke-width="0.9"/>
<path d="M4.8 401.8h4" stroke="#444" stroke-width="0.9"/>
<path d="M5.8 410.5h2" stroke="#444" stroke-width="0.9"/>
<path d="M2 384.2h9" stroke="#777" stroke-width="0.7"/>
<text transform="translate(3.5 384.2) rotate(90)" text-anchor="middle" font-family="Liberation Sans" font-size="9" fill="#222">11</text>
<path d="M5.8 428.1h2" stroke="#444" stroke-width="0.9"/>
<path d="M4.8 436.9h4" stroke="#444" stroke-width="0.9"/>
<path d="M2 419.3h9" stroke="#777" stroke-width="0.7"/>
<text transform="translate(3.5 419.3) rotate(90)" text-anchor="middle" font-family="Liberation Sans" font-size="9" fill="#222">12</text>
</svg>
<!-- DOCUMENT -->
<div class="a" style="left:21px;top:174px;width:23px;height:445px;background:linear-gradient(90deg,rgba(0,0,0,.14),rgba(0,0,0,.04) 18%,rgba(0,0,0,0) 30%,rgba(0,0,0,0) 75%,rgba(0,0,0,.06) 88%,rgba(0,0,0,.16)),linear-gradient(#bbc1cc,#b4bac5 40%,#9ea4af)"></div>
<div class="a" style="left:44px;top:174px;width:685px;height:445px;background:#fff;overflow:hidden" id="pg">
<div class="a" style="left:89px;top:0.8px;font-family:'Liberation Serif';font-size:20px;line-height:22px;color:#2f74b5">3.2 <span class="sp">Perceived</span> Risk</div>
<div class="a ln j" style="left:89px;top:45.0px"><span class="sp">Perc</span><span class="ins"><span class="sp">ei</span></span><span class="sp">ved</span> <span class="ins">r</span>isk kan het beste <span class="ins">worden omschreven</span> als het risico dat <span class="ins">een</span> consument voelt en ervaart</div>
<div class="a ln j" style="left:89px;top:70.9px">bij de aankoop van een product<span class="ins">, wanneer hij of zij aanneemt dat de aankoop negatieve</span></div>
<div class="a ln j" style="left:89px;top:96.9px"><span class="ins">consequenties kan hebben</span>. Uit onderzoek van <span class="hl"><span class="sp">Forsythe</span></span> <span class="ins">en</span> <span class="sp">Shi</span> (2003) <span class="ins">is gebleken</span> dat ‘internet</div>
<div class="a ln j" style="left:89px;top:122.8px"><span class="ins">b</span>rowsers’ gevoeliger zijn voor ‘<span class="sp">perceived</span> risk’ <span class="ins">dan</span> ‘internet <span class="sp">buyers</span><span class="ins">’. Dit verklaart waarom</span></div>
<div class="a ln" style="left:89px;top:148.7px"><span class="ins">internet browsers</span> de aankoop van product<span class="ins">en</span> in fysieke winkels aantrekkelijker vind<span class="ins">en</span></div>
<div class="a ln j" style="left:89px;top:200.6px">‘Financial’ <span class="ins">duidt op</span> het <span class="ins">risico om geld te verliezen. Uit</span> onderzoek van <span class="sp">Liao</span> en Cheung (2001) is</div>
<div class="a ln j" style="left:89px;top:226.5px">gebleken dat <span class="ins">het</span> <span class="hl">transactierisico</span> een significant negatieve impact heeft <span class="ins">op </span>de wil van de</div>
<div class="a ln j" style="left:89px;top:252.4px">consument om <span class="hl">te</span> kopen. <span class="ins">Een</span> veelvoorkomend risico dat consument<span class="ins">en</span> op het internet <span class="ins">ervaren,</span> is</div>
<div class="a ln j" style="left:89px;top:278.4px">creditcardfraude (<span class="sp">Forsythe</span> en <span class="sp">Shi</span>, 2003). Ook de paper van <span class="sp">Bhatnagar</span>, <span class="sp">Misra</span> en <span class="sp">Rao</span> (2000)</div>
<div class="a ln" style="left:89px;top:304.3px"><span class="ins">toont aan</span> dat consumenten creditcardfraude op <span class="ins">het</span> internet <span class="ins">als</span> een groot risico <span class="ins">beschouwen</span>.</div>
<div class="a ln j" style="left:89px;top:356.2px">Productperformance <span class="ins">duidt op </span>het verlies dat een consument li<span class="ins">j</span>dt, wanneer <span class="ins">een</span> product niet aan</div>
<div class="a ln j" style="left:89px;top:382.1px"><span class="ins">zijn of haar</span> verwachting voldoet. Dit kan bijvoorbeeld komen doordat <span class="ins">een</span> product <span class="ins">wordt</span></div>
<div class="a ln j" style="left:89px;top:408.0px"><span class="ins">afgeleverd </span>met <span class="ins">ee</span>n of meerdere defecten. <span class="ins">Consumenten maken daarnaast</span> vaak de verkeerde</div>
<div class="a ln j" style="left:89px;top:433.9px">inschatting van de kwaliteit van <span class="ins">hun internetaankopen</span>. Een oorzaak hierv<span class="ins">oor is</span> dat consumenten</div>
<div class="a" style="left:77px;top:46px;width:1.3px;height:129px;background:#111"></div>
<div class="a" style="left:77px;top:202px;width:1.3px;height:129px;background:#111"></div>
<div class="a" style="left:77px;top:358px;width:1.3px;height:87px;background:#111"></div>
<svg class="a" style="left:0;top:0" width="685" height="445" viewBox="44 174 685 445">
<path d="M160 237.1H729" stroke="#e8505a" stroke-width="1" stroke-dasharray="1.4 1.6" opacity="0.9"/>
<path d="M133 289.0H729" stroke="#e8505a" stroke-width="1" stroke-dasharray="1.4 1.6" opacity="0.9"/>
<path d="M133 314.9H729" stroke="#e8505a" stroke-width="1" stroke-dasharray="1.4 1.6" opacity="0.9"/>
<path d="M133 340.8H729" stroke="#e8505a" stroke-width="1" stroke-dasharray="1.4 1.6" opacity="0.9"/>
<path d="M203 392.7H729" stroke="#e8505a" stroke-width="1" stroke-dasharray="1.4 1.6" opacity="0.9"/>
<path d="M222 418.6H729" stroke="#e8505a" stroke-width="1" stroke-dasharray="1.4 1.6" opacity="0.9"/>
<path d="M236 444.5H729" stroke="#e8505a" stroke-width="1" stroke-dasharray="1.4 1.6" opacity="0.9"/>
<path d="M190 470.5H729" stroke="#e8505a" stroke-width="1" stroke-dasharray="1.4 1.6" opacity="0.9"/>
<path d="M133 496.4H729" stroke="#e8505a" stroke-width="1" stroke-dasharray="1.4 1.6" opacity="0.9"/>
<path d="M178 548.3H729" stroke="#e8505a" stroke-width="1" stroke-dasharray="1.4 1.6" opacity="0.9"/>
<path d="M133 574.2H729" stroke="#e8505a" stroke-width="1" stroke-dasharray="1.4 1.6" opacity="0.9"/>
<path d="M133 600.1H729" stroke="#e8505a" stroke-width="1" stroke-dasharray="1.4 1.6" opacity="0.9"/>
<path d="M133 626.0H729" stroke="#e8505a" stroke-width="1" stroke-dasharray="1.4 1.6" opacity="0.9"/>
<path d="M166.6 235.7h6l-3 4.5z" fill="#e2505c"/>
<path d="M198.0 235.7h6l-3 4.5z" fill="#e2505c"/>
<path d="M504.9 235.7h6l-3 4.5z" fill="#e2505c"/>
<path d="M551.8 235.7h6l-3 4.5z" fill="#e2505c"/>
<path d="M291.0 287.6h6l-3 4.5z" fill="#e2505c"/>
<path d="M491.0 287.6h6l-3 4.5z" fill="#e2505c"/>
<path d="M637.0 287.6h6l-3 4.5z" fill="#e2505c"/>
<path d="M136.3 313.5h6l-3 4.5z" fill="#e2505c"/>
<path d="M196.4 313.5h6l-3 4.5z" fill="#e2505c"/>
<path d="M461.0 313.5h6l-3 4.5z" fill="#e2505c"/>
<path d="M471.5 313.5h6l-3 4.5z" fill="#e2505c"/>
<path d="M717.0 313.5h6l-3 4.5z" fill="#e2505c"/>
<path d="M233.6 339.4h6l-3 4.5z" fill="#e2505c"/>
<path d="M331.8 339.4h6l-3 4.5z" fill="#e2505c"/>
<path d="M414.6 339.4h6l-3 4.5z" fill="#e2505c"/>
<path d="M647.3 339.4h6l-3 4.5z" fill="#e2505c"/>
<path d="M250.6 391.3h6l-3 4.5z" fill="#e2505c"/>
<path d="M438.0 391.3h6l-3 4.5z" fill="#e2505c"/>
<path d="M469.0 391.3h6l-3 4.5z" fill="#e2505c"/>
<path d="M237.5 417.2h6l-3 4.5z" fill="#e2505c"/>
<path d="M303.0 417.2h6l-3 4.5z" fill="#e2505c"/>
<path d="M437.6 417.2h6l-3 4.5z" fill="#e2505c"/>
<path d="M307.0 443.1h6l-3 4.5z" fill="#e2505c"/>
<path d="M335.7 443.1h6l-3 4.5z" fill="#e2505c"/>
<path d="M477.0 443.1h6l-3 4.5z" fill="#e2505c"/>
<path d="M703.4 443.1h6l-3 4.5z" fill="#e2505c"/>
<path d="M190.5 469.1h6l-3 4.5z" fill="#e2505c"/>
<path d="M426.0 469.1h6l-3 4.5z" fill="#e2505c"/>
<path d="M185.0 495.0h6l-3 4.5z" fill="#e2505c"/>
<path d="M355.0 495.0h6l-3 4.5z" fill="#e2505c"/>
<path d="M678.2 495.0h6l-3 4.5z" fill="#e2505c"/>
<path d="M176.5 546.9h6l-3 4.5z" fill="#e2505c"/>
<path d="M308.0 546.9h6l-3 4.5z" fill="#e2505c"/>
<path d="M507.3 546.9h6l-3 4.5z" fill="#e2505c"/>
<path d="M613.4 546.9h6l-3 4.5z" fill="#e2505c"/>
<path d="M207.7 572.8h6l-3 4.5z" fill="#e2505c"/>
<path d="M289.3 572.8h6l-3 4.5z" fill="#e2505c"/>
<path d="M620.6 572.8h6l-3 4.5z" fill="#e2505c"/>
<path d="M200.3 598.7h6l-3 4.5z" fill="#e2505c"/>
<path d="M242.5 598.7h6l-3 4.5z" fill="#e2505c"/>
<path d="M391.3 598.7h6l-3 4.5z" fill="#e2505c"/>
<path d="M531.5 598.7h6l-3 4.5z" fill="#e2505c"/>
</svg>
</div>
<!-- COMMENTS PANE -->
<div class="a" style="left:729px;top:174px;width:257px;height:445px;background:#f3f3f3;border-left:1px solid #dcdcdc"></div>
<div class="a" style="left:986px;top:174px;width:24px;height:445px;background:linear-gradient(90deg,rgba(0,0,0,.14),rgba(0,0,0,.04) 18%,rgba(0,0,0,0) 30%,rgba(0,0,0,0) 75%,rgba(0,0,0,.06) 88%,rgba(0,0,0,.16)),linear-gradient(#bbc1cc,#b4bac5 40%,#9ea4af)"></div>
<div class="a" style="left:1010px;top:174px;width:14px;height:445px;background:linear-gradient(90deg,#f0f0f0,#fafafa)"></div>
<div class="a" style="left:1014px;top:203px;width:8px;height:176px;border-radius:4px;background:#c3c3c3"></div>
<div class="a" style="left:1010px;top:574px;width:14px;height:45px;background:linear-gradient(90deg,#e8e8e8,#fbfbfb);border:1px solid #b8b8b8;border-radius:4px 0 0 4px"></div>
<svg class="a" style="left:1010px;top:574px" width="14" height="45"><path d="M3.5 8l3.5-4 3.5 4zM3.5 12l3.5-4 3.5 4z" fill="#222"/><path d="M3 11.5h8" stroke="#222"/><path d="M1 16h13M1 30h13" stroke="#bbb"/><circle cx="7" cy="23" r="3.2" fill="#fff" stroke="#444" stroke-width="1"/><path d="M3.5 34l3.5 4 3.5-4zM3.5 38l3.5 4 3.5-4z" fill="#222"/><path d="M3 34.5h8" stroke="#222"/></svg>
<div class="a" style="left:729px;top:174px;width:257px;height:445px;overflow:hidden">
<div class="a bal" style="left:30px;top:61.2px;width:224px;height:31.0px"></div>
<div class="a balh" style="left:30px;top:61.2px;width:224px;height:15px"></div>
<div class="a balt" style="left:36px;top:62.7px">SCRiBBR 28/11/14 08:45</div>
<svg class="a" style="left:224px;top:63.2px" width="11" height="11"><circle cx="5.5" cy="5.5" r="5.2" fill="#fff"/><path d="M2.8 5.8l2 2.2 3.6-4.6" fill="none" stroke="#ee98a0" stroke-width="1.7"/></svg>
<svg class="a" style="left:238px;top:63.2px" width="11" height="11"><circle cx="5.5" cy="5.5" r="5.2" fill="#fff"/><path d="M3.3 3.3l4.4 4.4M7.7 3.3l-4.4 4.4" stroke="#ee98a0" stroke-width="1.7"/></svg>
<div class="a balb" style="left:36px;top:77.5px"><b class="mono">Deleted:</b> &nbsp;<span style="text-decoration:underline wavy #e33;text-decoration-thickness:1px">ic…cd</span> rR…sk kan het beste</div>
<svg class="a" style="left:227px;top:79.7px" width="24" height="11"><rect x="0.75" y="0.75" width="22" height="9.5" rx="4.7" fill="#f6b5b9" stroke="#e0505c" stroke-width="1.5"/><circle cx="9" cy="5.5" r="0.9" fill="#222"/><circle cx="14.3" cy="5.5" r="0.9" fill="#2a4a9a"/><circle cx="19.5" cy="5.5" r="0.9" fill="#222"/></svg>
<div class="a bal" style="left:30px;top:111.9px;width:224px;height:44.5px"></div>
<div class="a balh" style="left:30px;top:111.9px;width:224px;height:15px"></div>
<div class="a balt" style="left:36px;top:113.4px">SCRiBBR 28/11/14 08:49</div>
<svg class="a" style="left:238px;top:113.9px" width="11" height="11"><circle cx="5.5" cy="5.5" r="5.2" fill="#fff"/><path d="M3.3 3.3l4.4 4.4M7.7 3.3l-4.4 4.4" stroke="#ee98a0" stroke-width="1.7"/></svg>
<div class="a balb" style="left:36px;top:128.2px"><b class="mono">Comment [1]:</b> &nbsp;Gebruik in de lopende tekst</div>
<div class="a balb" style="left:36px;top:141.1px">niet het &amp;-teken wanneer je auteurs noemt.</div>
<div class="a bal" style="left:30px;top:159.2px;width:224px;height:31.0px"></div>
<div class="a balh" style="left:30px;top:159.2px;width:224px;height:15px"></div>
<div class="a balt" style="left:36px;top:160.7px">SCRiBBR 28/11/14 08:58</div>
<svg class="a" style="left:224px;top:161.2px" width="11" height="11"><circle cx="5.5" cy="5.5" r="5.2" fill="#fff"/><path d="M2.8 5.8l2 2.2 3.6-4.6" fill="none" stroke="#ee98a0" stroke-width="1.7"/></svg>
<svg class="a" style="left:238px;top:161.2px" width="11" height="11"><circle cx="5.5" cy="5.5" r="5.2" fill="#fff"/><path d="M3.3 3.3l4.4 4.4M7.7 3.3l-4.4 4.4" stroke="#ee98a0" stroke-width="1.7"/></svg>
<div class="a balb" style="left:36px;top:175.5px"><b class="mono">Deleted:</b> &nbsp;&amp;…<span style="text-decoration:underline wavy #e33;text-decoration-thickness:1px">Shi</span> (2003) is gebleken k</div>
<svg class="a" style="left:227px;top:177.7px" width="24" height="11"><rect x="0.75" y="0.75" width="22" height="9.5" rx="4.7" fill="#f6b5b9" stroke="#e0505c" stroke-width="1.5"/><circle cx="9" cy="5.5" r="0.9" fill="#222"/><circle cx="14.3" cy="5.5" r="0.9" fill="#2a4a9a"/><circle cx="19.5" cy="5.5" r="0.9" fill="#222"/></svg>
<div class="a bal" style="left:30px;top:216.0px;width:224px;height:31.0px"></div>
<div class="a balh" style="left:30px;top:216.0px;width:224px;height:15px"></div>
<div class="a balt" style="left:36px;top:217.5px">SCRiBBR 28/11/14 09:07</div>
<svg class="a" style="left:224px;top:218.0px" width="11" height="11"><circle cx="5.5" cy="5.5" r="5.2" fill="#fff"/><path d="M2.8 5.8l2 2.2 3.6-4.6" fill="none" stroke="#ee98a0" stroke-width="1.7"/></svg>
<svg class="a" style="left:238px;top:218.0px" width="11" height="11"><circle cx="5.5" cy="5.5" r="5.2" fill="#fff"/><path d="M3.3 3.3l4.4 4.4M7.7 3.3l-4.4 4.4" stroke="#ee98a0" stroke-width="1.7"/></svg>
<div class="a balb" style="left:36px;top:232.3px"><b class="mono">Deleted:</b> &nbsp;risico wordt gezien als…het</div>
<svg class="a" style="left:227px;top:234.5px" width="24" height="11"><rect x="0.75" y="0.75" width="22" height="9.5" rx="4.7" fill="#f6b5b9" stroke="#e0505c" stroke-width="1.5"/><circle cx="9" cy="5.5" r="0.9" fill="#222"/><circle cx="14.3" cy="5.5" r="0.9" fill="#2a4a9a"/><circle cx="19.5" cy="5.5" r="0.9" fill="#222"/></svg>
<div class="a bal" style="left:30px;top:249.4px;width:224px;height:57.2px"></div>
<div class="a balh" style="left:30px;top:249.4px;width:224px;height:15px"></div>
<div class="a balt" style="left:36px;top:250.9px">SCRiBBR 28/11/14 08:57</div>
<svg class="a" style="left:238px;top:251.4px" width="11" height="11"><circle cx="5.5" cy="5.5" r="5.2" fill="#fff"/><path d="M3.3 3.3l4.4 4.4M7.7 3.3l-4.4 4.4" stroke="#ee98a0" stroke-width="1.7"/></svg>
<div class="a balb" style="left:36px;top:265.7px"><b class="mono">Comment [2]:</b> &nbsp;Hier heb je het eerder nog</div>
<div class="a balb" style="left:36px;top:278.6px">niet over gehad. Wat heeft dit te maken met</div>
<div class="a balb" style="left:36px;top:291.5px">financial risico?</div>
<div class="a bal" style="left:30px;top:309.2px;width:224px;height:31.0px"></div>
<div class="a balh" style="left:30px;top:309.2px;width:224px;height:15px"></div>
<div class="a balt" style="left:36px;top:310.7px">SCRiBBR 28/11/14 08:57</div>
<svg class="a" style="left:224px;top:311.2px" width="11" height="11"><circle cx="5.5" cy="5.5" r="5.2" fill="#fff"/><path d="M2.8 5.8l2 2.2 3.6-4.6" fill="none" stroke="#ee98a0" stroke-width="1.7"/></svg>
<svg class="a" style="left:238px;top:311.2px" width="11" height="11"><circle cx="5.5" cy="5.5" r="5.2" fill="#fff"/><path d="M3.3 3.3l4.4 4.4M7.7 3.3l-4.4 4.4" stroke="#ee98a0" stroke-width="1.7"/></svg>
<div class="a balb" style="left:36px;top:325.5px"><b class="mono">Deleted:</b> c</div>
<div class="a bal" style="left:30px;top:342.5px;width:224px;height:57.2px"></div>
<div class="a balh" style="left:30px;top:342.5px;width:224px;height:15px"></div>
<div class="a balt" style="left:36px;top:344.0px">SCRiBBR 28/11/14 09:25</div>
<svg class="a" style="left:238px;top:344.5px" width="11" height="11"><circle cx="5.5" cy="5.5" r="5.2" fill="#fff"/><path d="M3.3 3.3l4.4 4.4M7.7 3.3l-4.4 4.4" stroke="#ee98a0" stroke-width="1.7"/></svg>
<div class="a balb" style="left:36px;top:358.8px"><b class="mono">Comment [3]:</b> &nbsp;Suggestie: ‘…op de wil</div>
<div class="a balb" style="left:36px;top:371.7px">van de consument om producten online te</div>
<div class="a balb" style="left:36px;top:384.6px">kopen’.</div>
<div class="a bal" style="left:30px;top:402.2px;width:224px;height:31.0px"></div>
<div class="a balh" style="left:30px;top:402.2px;width:224px;height:15px"></div>
<div class="a balt" style="left:36px;top:403.7px">SCRiBBR 28/11/14 09:31</div>
<svg class="a" style="left:224px;top:404.2px" width="11" height="11"><circle cx="5.5" cy="5.5" r="5.2" fill="#fff"/><path d="M2.8 5.8l2 2.2 3.6-4.6" fill="none" stroke="#ee98a0" stroke-width="1.7"/></svg>
<svg class="a" style="left:238px;top:404.2px" width="11" height="11"><circle cx="5.5" cy="5.5" r="5.2" fill="#fff"/><path d="M3.3 3.3l4.4 4.4M7.7 3.3l-4.4 4.4" stroke="#ee98a0" stroke-width="1.7"/></svg>
<div class="a balb" style="left:36px;top:418.5px"><b class="mono">Deleted:</b> &nbsp;Het…veel …oorkomend risic</div>
<svg class="a" style="left:227px;top:420.7px" width="24" height="11"><rect x="0.75" y="0.75" width="22" height="9.5" rx="4.7" fill="#f6b5b9" stroke="#e0505c" stroke-width="1.5"/><circle cx="9" cy="5.5" r="0.9" fill="#222"/><circle cx="14.3" cy="5.5" r="0.9" fill="#2a4a9a"/><circle cx="19.5" cy="5.5" r="0.9" fill="#222"/></svg>
<div class="a bal" style="left:30px;top:435.3px;width:224px;height:31.0px"></div>
<div class="a balh" style="left:30px;top:435.3px;width:224px;height:15px"></div>
<div class="a balt" style="left:36px;top:436.8px">SCRiBBR 28/11/14 08:55</div>
<svg class="a" style="left:224px;top:437.3px" width="11" height="11"><circle cx="5.5" cy="5.5" r="5.2" fill="#fff"/><path d="M2.8 5.8l2 2.2 3.6-4.6" fill="none" stroke="#ee98a0" stroke-width="1.7"/></svg>
<svg class="a" style="left:238px;top:437.3px" width="11" height="11"><circle cx="5.5" cy="5.5" r="5.2" fill="#fff"/><path d="M3.3 3.3l4.4 4.4M7.7 3.3l-4.4 4.4" stroke="#ee98a0" stroke-width="1.7"/></svg>
<div class="a balb" style="left:36px;top:451.6px"><b class="mono">Deleted:</b> x</div>
</div>
<svg class="a" style="left:726px;top:174px" width="34" height="445" viewBox="726 174 34 445">
<path d="M726 237.7L759.5 242" stroke="#e2505c" stroke-width="1" stroke-dasharray="1.5 0.8" opacity="1"/>
<path d="M726 289.6L759.5 246" stroke="#e2505c" stroke-width="1" stroke-dasharray="1.5 0.8" opacity="1"/>
<path d="M726 289.6L759.5 293" stroke="#e2505c" stroke-width="1" stroke-dasharray="1.5 0.8" opacity="1"/>
<path d="M726 289.6L759.5 337" stroke="#e2505c" stroke-width="1" stroke-dasharray="1.5 0.8" opacity="1"/>
<path d="M726 315.5L759.5 338" stroke="#e2505c" stroke-width="1" stroke-dasharray="1.5 0.8" opacity="1"/>
<path d="M726 341.4L759.5 340" stroke="#e2505c" stroke-width="1" stroke-dasharray="1.5 0.8" opacity="1"/>
<path d="M726 393.3L759.5 397" stroke="#e2505c" stroke-width="1" stroke-dasharray="1.5 0.8" opacity="1"/>
<path d="M726 419.2L759.5 397" stroke="#e2505c" stroke-width="1" stroke-dasharray="1.5 0.8" opacity="1"/>
<path d="M726 419.2L759.5 429" stroke="#e2505c" stroke-width="1" stroke-dasharray="1.5 0.8" opacity="1"/>
<path d="M726 419.2L759.5 486" stroke="#e2505c" stroke-width="1" stroke-dasharray="1.5 0.8" opacity="1"/>
<path d="M726 445.1L759.5 520" stroke="#e2505c" stroke-width="1" stroke-dasharray="1.5 0.8" opacity="1"/>
<path d="M726 445.1L759.5 582" stroke="#e2505c" stroke-width="1" stroke-dasharray="1.5 0.8" opacity="1"/>
<path d="M726 445.1L759.5 614" stroke="#e2505c" stroke-width="1" stroke-dasharray="1.5 0.8" opacity="1"/>
<path d="M726 471.1L759.5 582" stroke="#e2505c" stroke-width="1" stroke-dasharray="1.5 0.8" opacity="1"/>
<path d="M726 471.1L759.5 614" stroke="#e2505c" stroke-width="1" stroke-dasharray="1.5 0.8" opacity="1"/>
<path d="M726 497.0L759.5 582" stroke="#e2505c" stroke-width="1" stroke-dasharray="1.5 0.8" opacity="1"/>
<path d="M726 497.0L759.5 614" stroke="#e2505c" stroke-width="1" stroke-dasharray="1.5 0.8" opacity="1"/>
<path d="M726 548.9L759.5 614" stroke="#e2505c" stroke-width="1" stroke-dasharray="1.5 0.8" opacity="1"/>
<path d="M726 574.8L759.5 614" stroke="#e2505c" stroke-width="1" stroke-dasharray="1.5 0.8" opacity="1"/>
<path d="M726 600.7L759.5 614" stroke="#e2505c" stroke-width="1" stroke-dasharray="1.5 0.8" opacity="1"/>
<path d="M726 626.6L759.5 614" stroke="#e2505c" stroke-width="1" stroke-dasharray="1.5 0.8" opacity="1"/>
</svg>
<!-- STATUS -->
<div class="a" style="left:0;top:619px;width:1024px;height:15px;background:#f6f6f6;border-top:1px solid #d6d6d6"></div>
<div class="a" style="left:1010px;top:619px;width:14px;height:15px;background:#ececec"></div>
<div class="a" style="left:0;top:634px;width:1024px;height:16px;background:linear-gradient(#e9e9e9,#dadada);border-top:1px solid #a9a9a9"></div>
<div class="a ssep" style="left:297px"></div><div class="a ssep" style="left:348px"></div><div class="a ssep" style="left:468px"></div><div class="a ssep" style="left:601px"></div><div class="a ssep" style="left:642px"></div>
<div class="a stt" style="left:182px">Print Layout View</div>
<div class="a stt" style="left:303px">Sec</div><div class="a stt" style="left:338px">1</div>
<div class="a stt" style="left:358px">Pages:</div><div class="a stt" style="left:414px">1 of 1</div>
<div class="a stt" style="left:478px">Words:</div><div class="a stt" style="left:540px">4 of 289</div>
<svg class="a" style="left:612px;top:636px" width="22" height="14"><path d="M2 4c3-1 6-1 8 1 2-2 5-2 8-1v9c-3-1-6-1-8 1-2-2-5-2-8-1z" fill="#f4f0e8" stroke="#444" stroke-width="1"/><path d="M10 5v9" stroke="#444"/><path d="M4 7h4M4 9h4M12 7h4M12 9h4" stroke="#999" stroke-width="0.7"/><path d="M14 1l5 5M19 1l-5 5" stroke="#e02020" stroke-width="2"/></svg>
<div class="a stt" style="left:853px;font-size:12px">125%</div>
<div class="a" style="left:897px;top:640px;width:99px;height:5px;border-radius:3px;background:linear-gradient(#b8b8b8,#e8e8e8);border:1px solid #9a9a9a"></div>
<div class="a" style="left:944px;top:637px;width:11px;height:11px;border-radius:50%;background:radial-gradient(circle at 50% 40%,#fff,#d0d0d0);border:1px solid #8a8a8a"></div>
<div class="a" style="left:948px;top:641px;width:3px;height:3px;border-radius:50%;background:#555"></div>
<svg class="a" style="left:1012px;top:638px" width="12" height="12"><path d="M11 3L3 11M11 7L7 11M11 10l-1 1" stroke="#999" stroke-width="1"/></svg>
<!-- view buttons -->
<div class="a" style="left:0;top:619px;width:176px;height:31px;background:linear-gradient(#eeeeee,#dedede);border-right:1px solid #b5b5b5;border-top:1px solid #c8c8c8"></div>
<div class="a" style="left:3px;top:624px;width:170px;height:24px;border:1px solid #8f8f8f;border-radius:4px;background:linear-gradient(#fdfdfd,#e3e3e3)"></div>
<div class="a" style="left:88px;top:625px;width:28px;height:22px;background:linear-gradient(#555,#6a6a6a);box-shadow:inset 0 1px 3px rgba(0,0,0,.5)"></div>
<div class="a vdiv" style="left:31px;top:625px;height:22px;background:#9a9a9a"></div><div class="a vdiv" style="left:59px;top:625px;height:22px;background:#9a9a9a"></div><div class="a vdiv" style="left:87px;top:625px;height:22px;background:#9a9a9a"></div><div class="a vdiv" style="left:116px;top:625px;height:22px;background:#9a9a9a"></div><div class="a vdiv" style="left:144px;top:625px;height:22px;background:#9a9a9a"></div>
<svg class="a" style="left:0;top:618px" width="176" height="32" viewBox="0 618 176 32">
 <path d="M11 631.3h13.5M11 635.7h13.5M11 640h13.5" stroke="#1a1a1a" stroke-width="1.6"/>
 <path d="M37.4 631.3h3M42 631.3h7M40.4 635.7h3M45 635.7h6M43 640h2.5M47 640h6.6" stroke="#1a1a1a" stroke-width="1.6"/>
 <rect x="65" y="630.3" width="16.7" height="11.4" rx="1.5" fill="#2a2a2a"/><path d="M68.5 632v8h1.5M68.5 632h1.5M78 632v8h-1.5M78 632h-1.5" fill="none" stroke="#ddd" stroke-width="1"/><path d="M72 631.5v8.5l2-2 1.6 3 1.2-0.6-1.5-3h2.8z" fill="#fff" stroke="#222" stroke-width="0.4"/>
 <rect x="93.1" y="630" width="16.7" height="12" rx="1.5" fill="#7ec0f4" stroke="#3a88d0" stroke-width="1"/><path d="M95 634h13M95 638h13" stroke="#1e3a60" stroke-width="1.3"/>
 <rect x="122" y="630.3" width="14.7" height="11.4" rx="1.5" fill="#2a2a2a"/><path d="M122.5 633.3h14M122.5 636h14M122.5 638.7h14M125 630.5v11" stroke="#ccc" stroke-width="0.8"/>
 <rect x="150.3" y="630.3" width="15.3" height="11.4" rx="1.5" fill="#2a2a2a"/><path d="M152.5 632.5l4 3M152.5 632.5h3M152.5 632.5v2.6M163.5 639.5l-4-3M163.5 639.5h-3M163.5 639.5v-2.6" stroke="#fff" stroke-width="1.1" fill="none"/>
</svg>
<!-- yellow highlight + cursor -->
<div class="a" style="left:596px;top:5px;width:49px;height:49px;border-radius:50%;background:#ece86e;opacity:0.97"></div>
<div class="a" style="left:428px;top:1px;font-size:13.8px;color:#4d4d4d;line-height:18px;mix-blend-mode:multiply">Voorbeeldtekst redigeren.docx</div>
<svg class="a" style="left:617px;top:26px" width="14" height="20" viewBox="0 0 14 20"><path d="M2 1v15l3.5-3.5 2.5 5.5 2.2-1-2.4-5.3h5z" fill="#000" stroke="#fff" stroke-width="1"/></svg>
</body></html>
